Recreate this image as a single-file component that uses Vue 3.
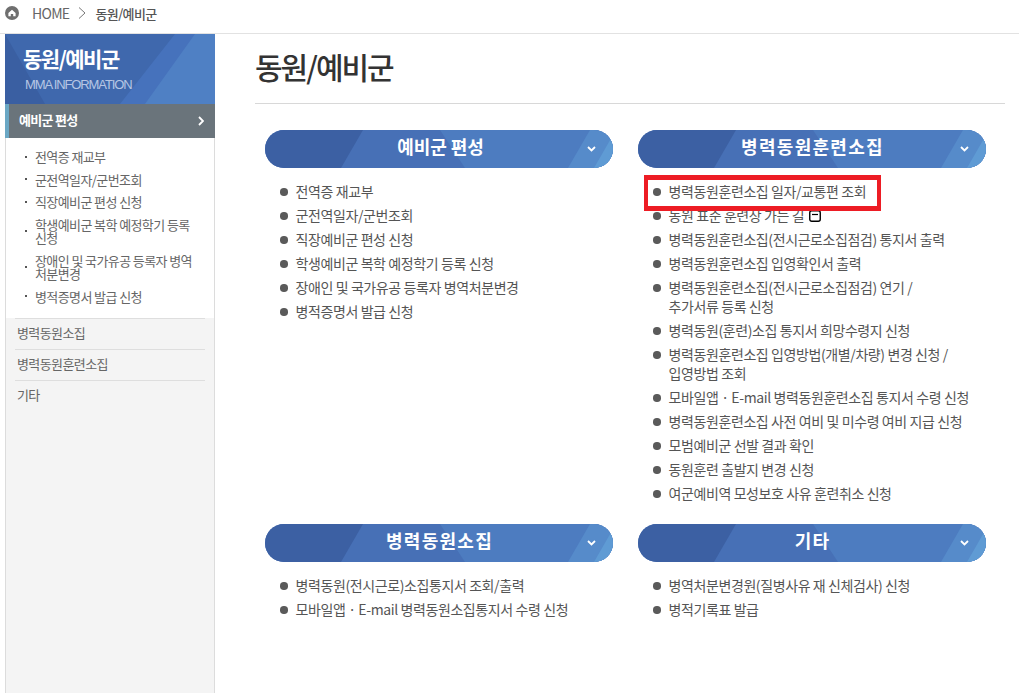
<script setup>
const sideSub = [
  '전역증 재교부',
  '군전역일자/군번조회',
  '직장예비군 편성 신청',
  '학생예비군 복학 예정학기 등록 신청',
  '장애인 및 국가유공 등록자 병역 처분변경',
  '병적증명서 발급 신청'
]
const sideMore = ['병력동원소집', '병력동원훈련소집', '기타']
const panels = [
  { title: '예비군 편성', tight: true, items: ['전역증 재교부', '군전역일자/군번조회', '직장예비군 편성 신청', '학생예비군 복학 예정학기 등록 신청', '장애인 및 국가유공 등록자 병역처분변경', '병적증명서 발급 신청'] },
  { title: '병력동원훈련소집', items: ['병력동원훈련소집 일자/교통편 조회', '동원 표준 훈련장 가는 길', '병력동원훈련소집(전시근로소집점검) 통지서 출력', '병력동원훈련소집 입영확인서 출력', '병력동원훈련소집(전시근로소집점검) 연기 /\n추가서류 등록 신청', '병력동원(훈련)소집 통지서 희망수령지 신청', '병력동원훈련소집 입영방법(개별/차량) 변경 신청 /\n입영방법 조회', '모바일앱 · E-mail 병력동원훈련소집 통지서 수령 신청', '병력동원훈련소집 사전 여비 및 미수령 여비 지급 신청', '모범예비군 선발 결과 확인', '동원훈련 출발지 변경 신청', '여군예비역 모성보호 사유 훈련취소 신청'] },
  { title: '병력동원소집', items: ['병력동원(전시근로)소집통지서 조회/출력', '모바일앱 · E-mail 병력동원소집통지서 수령 신청'] },
  { title: '기타', items: ['병역처분변경원(질병사유 재 신체검사) 신청', '병적기록표 발급'] }
]
</script>

<template>
  <div class="page">
    <header class="crumbs">
      <span class="home">
        <svg viewBox="0 0 14 14" width="14" height="14"><circle cx="7" cy="7" r="7" fill="#6f6f6f"/><path d="M3.4 7 7 3.8 10.6 7v3.2H8.2V8H5.8v2.2H3.4z" fill="#fff"/></svg>
      </span>
      <span class="crumb">HOME</span>
      <svg class="sep" viewBox="0 0 8 12" width="8" height="12"><path d="M1 0.5 7 6 1 11.5" fill="none" stroke="#777" stroke-width="1"/></svg>
      <span class="crumb current">동원/예비군</span>
    </header>

    <div class="body">
      <aside class="side">
        <div class="banner">
          <svg class="banner-art" viewBox="0 0 210 70" preserveAspectRatio="none">
            <path d="M0 0H210V70H0z" fill="#3f68ad"/>
            <path d="M0 0 40 70H0z" fill="#3a5fa2"/>
            <path d="M115 70 170 0H210V70z" fill="#4672bc"/>
            <path d="M140 70 190 0H210V70z" fill="#4f80c4"/>
          </svg>
          <div class="banner-title">동원/예비군</div>
          <div class="banner-sub">MMA INFORMATION</div>
        </div>
        <div class="active">
          <span class="active-label">예비군 편성</span>
          <svg viewBox="0 0 6 10" width="6" height="10"><path d="M1 1l4 4-4 4" fill="none" stroke="#fff" stroke-width="1.8"/></svg>
        </div>
        <ul class="sub">
          <li v-for="s in sideSub" :key="s"><span class="dot"></span><span class="sub-text">{{ s }}</span></li>
        </ul>
        <div class="more">
          <div v-for="m in sideMore" :key="m" class="more-item">{{ m }}</div>
        </div>
      </aside>

      <main class="main">
        <h1 class="title">동원/예비군</h1>
        <div class="grid">
          <section v-for="p in panels" :key="p.title" class="panel">
            <div class="pill">
              <svg class="pill-art" viewBox="0 0 348 38" preserveAspectRatio="none">
                <path d="M0 0H348V38H0z" fill="#4770b6"/>
                <path d="M0 0H98L76 38H0z" fill="#3c60a3"/>
                <path d="M175 0H348V38H200z" fill="#4d7cc0"/>
                <path d="M325 0H348V38H303z" fill="#568bca"/>
                <path d="M329 38 348 5V38z" fill="#5f9bd4"/>
              </svg>
              <span class="pill-title" :class="{ tight: p.tight }">{{ p.title }}</span>
              <svg class="chev" viewBox="0 0 9 6" width="9" height="6"><path d="M1 1l3.5 3.5L8 1" fill="none" stroke="#fff" stroke-width="1.8"/></svg>
            </div>
            <ul class="list">
              <li v-for="it in p.items" :key="it">
                <span class="bullet"></span>
                <span class="item-text">{{ it }}<svg v-if="it === '동원 표준 훈련장 가는 길'" class="ext" viewBox="0 0 12 12" width="12" height="12"><rect x="0.75" y="0.75" width="10.5" height="10.5" rx="2" fill="#fff" stroke="#000" stroke-width="1.4"/><path d="M3 4.5h6" stroke="#000" stroke-width="1.2"/></svg></span>
              </li>
            </ul>
          </section>
        </div>
        <div class="redbox"></div>
      </main>
    </div>
  </div>
</template>

<style>
html, body { margin: 0; background: #fff; overflow: hidden; }
</style>

<style scoped>
.page {
  width: 1019px;
  height: 693px;
  overflow: hidden;
  font-family: "Noto Sans CJK KR", "Noto Sans", sans-serif;
  color: #555;
  display: flex;
  flex-direction: column;
}
.crumbs {
  border-bottom: 1px solid #e2e2e2;
  display: flex;
  align-items: center;
  padding-left: 5px;
  padding-bottom: 7px;
  height: 26px;
  font-size: 14px;
  color: #666;
  letter-spacing: -0.7px;
}
.home { display: flex; width: 14px; height: 14px; margin-right: 13px; }
.sep { margin: 0 9px 0 9px; }
.crumb.current { font-size: 13px; font-weight: 500; color: #555; letter-spacing: -0.6px; }
.body { flex: 1; display: flex; min-height: 0; }
.side {
  width: 210px;
  margin-left: 5px;
  box-sizing: border-box;
  background: #f4f4f4;
  border-right: 1px solid #dcdcdc;
  border-left: 1px solid #dcdcdc;
  display: flex;
  flex-direction: column;
}
.banner {
  position: relative;
  height: 70px;
  margin: 0 -1px;
  overflow: hidden;
  box-sizing: border-box;
  padding: 8px 0 0 18px;
  color: #fff;
}
.banner-art { position: absolute; inset: 0; width: 100%; height: 100%; }
.banner-title {
  position: relative;
  font-size: 21px;
  line-height: 32px;
  font-weight: 700;
  letter-spacing: -1.5px;
}
.banner-sub {
  position: relative;
  font-size: 13px;
  line-height: 18px;
  margin: 2px 0 0 2px;
  color: #b6c6e4;
  letter-spacing: -1.12px;
  font-family: "Liberation Sans", sans-serif;
}
.active {
  margin: 0 -1px;
  height: 34px;
  background: #6a747b;
  border-left: 4px solid #6aa7c4;
  box-sizing: border-box;
  display: flex;
  align-items: center;
  justify-content: space-between;
  padding: 0 11px 0 10px;
  color: #fff;
  font-size: 13px;
  font-weight: 700;
  letter-spacing: -0.7px;
}
.active-label { margin-top: -4px; }
.sub {
  list-style: none;
  margin: 0;
  padding: 12px 10px 15px 9px;
  background: #fff;
  display: flex;
  flex-direction: column;
  gap: 9px;
}
.sub li { display: flex; align-items: center; font-size: 13px; line-height: 13.5px; color: #666; letter-spacing: -0.6px; word-break: keep-all; }
.dot { width: 2px; height: 2px; background: #555; flex: none; margin: 0 8px 0 10px; }
.sub-text { flex: 1; }
.more { flex: 1; padding: 0 9px; }
.more-item {
  border-top: 1px solid #dedede;
  height: 31px;
  box-sizing: border-box;
  line-height: 28px;
  font-size: 13px;
  letter-spacing: -0.6px;
  color: #666;
  padding-left: 2px;
}
.main { flex: 1; position: relative; min-width: 0; padding-left: 40px; }
.title {
  margin: 0;
  width: 750px;
  box-sizing: border-box;
  height: 70px;
  border-bottom: 1px solid #d8d8d8;
  font-size: 30px;
  line-height: 65px;
  font-weight: 500;
  color: #333;
  letter-spacing: -2px;
}
.grid {
  display: grid;
  grid-template-columns: 348px 348px;
  column-gap: 25px;
  margin: 26px 0 0 10px;
}
.pill {
  position: relative;
  height: 38px;
  border-radius: 19px;
  overflow: hidden;
  display: flex;
  align-items: center;
  justify-content: center;
}
.pill-art { position: absolute; inset: 0; width: 100%; height: 100%; }
.pill-title {
  position: relative;
  color: #fff;
  font-size: 18px;
  font-weight: 700;
  letter-spacing: 1.3px;
  margin: -7px 0 0 1px;
}
.pill-title.tight { letter-spacing: -0.1px; margin-left: 3px; }
.chev { position: absolute; right: 17px; top: 16px; }
.list {
  list-style: none;
  margin: 0;
  padding: 14px 0 16px 15px;
}
.list li {
  display: flex;
  align-items: flex-start;
  font-size: 14px;
  line-height: 19px;
  margin-bottom: 5px;
  color: #555;
  letter-spacing: -0.4px;
  white-space: pre-line;
}
.bullet {
  width: 7.5px;
  height: 7.5px;
  border-radius: 50%;
  background: #5a5a5a;
  margin: 6px 8px 0 0;
  flex: none;
}
.ext { margin-left: 5px; vertical-align: -1px; }
.redbox {
  position: absolute;
  left: 429px;
  top: 141px;
  width: 237px;
  height: 36px;
  box-sizing: border-box;
  border-style: solid;
  border-color: #ed1c24;
  border-width: 5px 4px;
  pointer-events: none;
}
</style>
